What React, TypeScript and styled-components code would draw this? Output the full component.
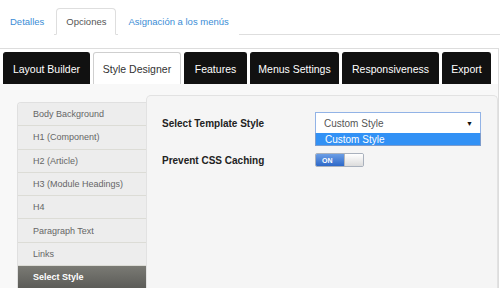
import React from 'react';
import styled, { createGlobalStyle } from 'styled-components';

const topTabs = ['Detalles', 'Opciones', 'Asignación a los menús'];
const designerTabs = [
  { label: 'Layout Builder', width: 87 },
  { label: 'Style Designer', width: 88 },
  { label: 'Features', width: 63 },
  { label: 'Menus Settings', width: 89 },
  { label: 'Responsiveness', width: 97 },
  { label: 'Export', width: 49 },
];
const styleItems = [
  'Body Background',
  'H1 (Component)',
  'H2 (Article)',
  'H3 (Module Headings)',
  'H4',
  'Paragraph Text',
  'Links',
  'Select Style',
];

const GlobalStyle = createGlobalStyle`
  html, body {
    margin: 0;
    padding: 0;
    background: #fff;
  }
  body {
    font-family: 'Liberation Sans', Arial, sans-serif;
    overflow: hidden;
  }
`;

const Page = styled.div`
  width: 500px;
  height: 288px;
  display: flex;
  flex-direction: column;
  overflow: hidden;
`;

const TopNav = styled.nav`
  display: flex;
  align-items: flex-end;
  height: 35px;
  padding-top: 8px;
  box-sizing: border-box;
  border-bottom: 1px solid #dedede;
`;

const TopTab = styled.a<{ $active?: boolean }>`
  display: flex;
  align-items: center;
  height: 27px;
  box-sizing: border-box;
  padding: 0 9px;
  margin-right: 2px;
  margin-bottom: -1px;
  font-size: 9.5px;
  color: ${(p) => (p.$active ? '#555' : '#3b8dd6')};
  background: #fff;
  border: 1px solid ${(p) => (p.$active ? '#dedede' : 'transparent')};
  border-bottom: 1px solid ${(p) => (p.$active ? '#fff' : 'transparent')};
  border-radius: 4px 4px 0 0;
`;

const ModuleBox = styled.section`
  flex: 1;
  display: flex;
  flex-direction: column;
  margin-top: 13px;
  margin-right: 1px;
  border-top: 1px solid #dddddd;
  border-right: 1px solid #dddddd;
  min-height: 0;
`;

const TabBar = styled.div`
  display: flex;
  gap: 3px;
  padding: 3px 3px 0;
  background: #fff;
`;

const DesignTab = styled.div<{ $active?: boolean; $width: number }>`
  display: flex;
  align-items: center;
  justify-content: center;
  width: ${(p) => p.$width}px;
  flex: none;
  height: 32px;
  box-sizing: border-box;
  font-size: 10.5px;
  color: ${(p) => (p.$active ? '#333' : '#fff')};
  background: ${(p) => (p.$active ? '#fff' : '#111')};
  border: 1px solid ${(p) => (p.$active ? '#cfcfcf' : '#111')};
  border-bottom: none;
  border-radius: 3px 3px 0 0;
  white-space: nowrap;
`;

const Content = styled.div`
  flex: 1;
  display: flex;
  align-items: flex-start;
  padding: 11px 0 0 17px;
  background: #f8f8f8;
  min-height: 0;
`;

const Sidebar = styled.ul`
  list-style: none;
  margin: 7px 0 0;
  padding: 0;
  width: 128px;
  border-top: 1px solid #e0e0e0;
  border-left: 1px solid #e0e0e0;
  border-radius: 4px 0 0 0;
  overflow: hidden;
`;

const StyleItem = styled.li<{ $active?: boolean }>`
  display: flex;
  align-items: center;
  height: 23.3px;
  box-sizing: border-box;
  padding-left: 15px;
  font-size: 9px;
  color: ${(p) => (p.$active ? '#fff' : '#666')};
  font-weight: ${(p) => (p.$active ? 'bold' : 'normal')};
  background: ${(p) => (p.$active ? 'linear-gradient(#7a7a74, #5c5c58)' : '#ededed')};
  border-bottom: 1px solid ${(p) => (p.$active ? '#555' : '#dcdcd6')};
`;

const Panel = styled.div`
  flex: 1;
  align-self: stretch;
  background: #f5f5f5;
  border: 1px solid #e2e2e2;
  border-bottom: none;
  border-radius: 5px 5px 0 0;
  padding: 16px 0 0 15px;
`;

const FormGrid = styled.div`
  display: grid;
  grid-template-columns: 153px 166px;
  row-gap: 19px;
  align-items: center;
`;

const Label = styled.span`
  font-size: 10px;
  font-weight: bold;
  color: #222;
`;

const SelectBox = styled.div`
  position: relative;
  height: 22px;
  box-sizing: border-box;
  display: flex;
  align-items: center;
  justify-content: space-between;
  padding: 0 7px 0 8px;
  background: #fff;
  border: 1px solid #92b3e6;
  font-size: 10px;
  color: #555;
`;

const Arrow = styled.span`
  font-size: 7px;
  color: #111;
`;

const OptionList = styled.div`
  position: absolute;
  top: 100%;
  left: -1px;
  right: -1px;
  height: 13px;
  box-sizing: border-box;
  display: flex;
  align-items: center;
  padding-left: 9px;
  background: #3291f5;
  border: 1px solid #7d9ccc;
  border-top: none;
  color: #fff;
  font-size: 10px;
`;

const Toggle = styled.div`
  display: flex;
  width: 49px;
  height: 14px;
  box-sizing: border-box;
  border: 1px solid #a9b1bd;
  border-radius: 2px;
  overflow: hidden;
`;

const ToggleOn = styled.span`
  width: 28px;
  display: flex;
  align-items: center;
  padding-left: 6px;
  box-sizing: border-box;
  background: linear-gradient(#6b9ee6, #2d68c8);
  color: #fff;
  font-size: 7px;
  font-weight: bold;
`;

const ToggleOff = styled.span`
  flex: 1;
  background: linear-gradient(#ffffff, #dcdcdc);
  border-left: 1px solid #b8b8b8;
`;

export default function App() {
  return (
    <Page>
      <GlobalStyle />
      <TopNav>
        {topTabs.map((t) => (
          <TopTab key={t} $active={t === 'Opciones'}>
            {t}
          </TopTab>
        ))}
      </TopNav>
      <ModuleBox>
        <TabBar>
          {designerTabs.map((t) => (
            <DesignTab key={t.label} $width={t.width} $active={t.label === 'Style Designer'}>
              {t.label}
            </DesignTab>
          ))}
        </TabBar>
        <Content>
          <Sidebar>
            {styleItems.map((s) => (
              <StyleItem key={s} $active={s === 'Select Style'}>
                {s}
              </StyleItem>
            ))}
          </Sidebar>
          <Panel>
            <FormGrid>
              <Label>Select Template Style</Label>
              <SelectBox>
                Custom Style
                <Arrow>▼</Arrow>
                <OptionList>Custom Style</OptionList>
              </SelectBox>
              <Label>Prevent CSS Caching</Label>
              <Toggle>
                <ToggleOn>ON</ToggleOn>
                <ToggleOff />
              </Toggle>
            </FormGrid>
          </Panel>
        </Content>
      </ModuleBox>
    </Page>
  );
}
